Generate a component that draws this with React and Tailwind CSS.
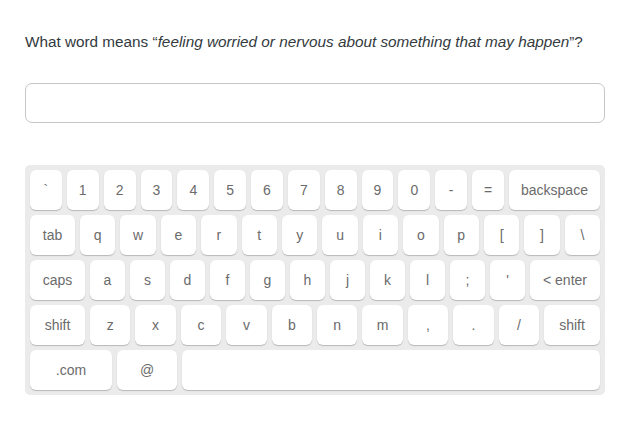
import React from 'react';

const font = { fontFamily: '"Liberation Sans", Arial, sans-serif' };

function Key({ label, className = 'flex-1' }) {
  return (
    <div
      className={`${className} h-10 bg-white rounded-md shadow-[0_1px_1px_rgba(0,0,0,0.22)] flex items-center justify-center text-[14px] text-[#6b6b6b] select-none`}
    >
      {label}
    </div>
  );
}

const row1 = ['`', '1', '2', '3', '4', '5', '6', '7', '8', '9', '0', '-', '='];
const row2 = ['q', 'w', 'e', 'r', 't', 'y', 'u', 'i', 'o', 'p', '[', ']', '\\'];
const row3 = ['a', 's', 'd', 'f', 'g', 'h', 'j', 'k', 'l', ';', "'"];
const row4 = ['z', 'x', 'c', 'v', 'b', 'n', 'm', ',', '.', '/'];

export default function App() {
  return (
    <div className="w-[632px] h-[424px] bg-white px-[25px] pt-[32px]" style={font}>
      <p className="text-[15.3px] leading-[19px] text-[#333a40]">
        What word means “<em>feeling worried or nervous about something that may happen</em>”?
      </p>

      <div className="mt-[32px] h-[40px] w-[580px] rounded-[7px] border border-[#c6c6c6]" />

      <div className="mt-[42px] w-[580px] bg-[#ebebeb] rounded-[5px] p-[5px] flex flex-col gap-[5px]">
        <div className="flex gap-[5px]">
          {row1.map(k => <Key key={k} label={k} />)}
          <Key label="backspace" className="w-[91px]" />
        </div>
        <div className="flex gap-[5px]">
          <Key label="tab" className="w-[45px]" />
          {row2.map(k => <Key key={k} label={k} />)}
        </div>
        <div className="flex gap-[5px]">
          <Key label="caps" className="w-[55px]" />
          {row3.map(k => <Key key={k} label={k} />)}
          <Key label="< enter" className="w-[70px]" />
        </div>
        <div className="flex gap-[5px]">
          <Key label="shift" className="w-[55px]" />
          {row4.map(k => <Key key={k} label={k} />)}
          <Key label="shift" className="w-[56px]" />
        </div>
        <div className="flex gap-[5px]">
          <Key label=".com" className="w-[82px]" />
          <Key label="@" className="w-[60px]" />
          <Key label="" />
        </div>
      </div>
    </div>
  );
}
